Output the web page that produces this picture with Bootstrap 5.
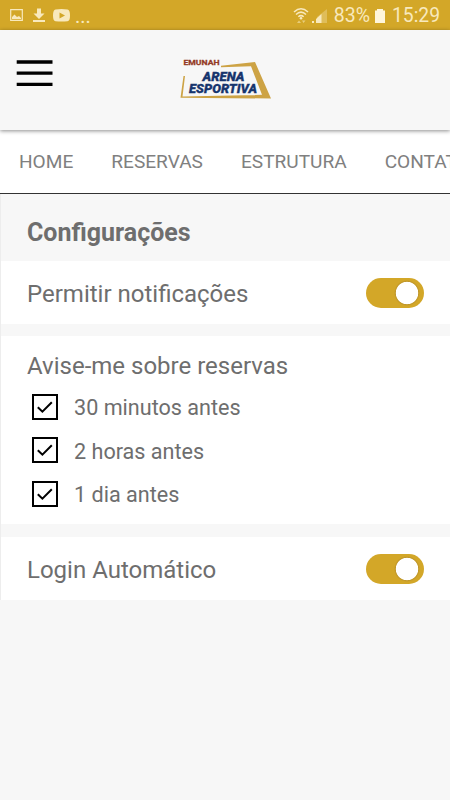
<!DOCTYPE html>
<html lang="pt-BR">
<head>
<meta charset="utf-8">
<meta name="viewport" content="width=device-width, initial-scale=1">
<title>Configurações</title>
<link href="https://cdn.jsdelivr.net/npm/bootstrap@5.3.0/dist/css/bootstrap.min.css" rel="stylesheet">
<style>
body{font-family:Roboto,"Noto Sans",sans-serif;background:#f7f7f7;color:#6e6e6e;min-height:800px;overflow-x:hidden}
.status{height:30px;background:#d3a728;color:#f8e9bd;padding:2px 10px 0 9px;font-size:20px;line-height:28px}
.status svg{flex:none}
.dots{font-size:20px;margin-left:2px}
.pct{margin-left:6px;font-size:19.5px}
.battery{margin-left:4px}
.clock{margin-left:6px;font-size:19.3px}
.topbar{height:100px;background:#f7f7f7;box-shadow:0 1px 4px rgba(0,0,0,.45);z-index:2}
.burger{margin:30px 0 0 16px}
.brand{margin:26px 0 0 125px}
.tabs{height:64px;border-bottom:1px solid #333;background:#fff;padding:1px 0 0 19px;gap:38px;font-size:19.1px;color:#808080;overflow:hidden}
.tabs a{color:inherit;white-space:nowrap}
.pane{border-left:1px solid #ededed}
.page-title{height:67px;padding:10px 0 0 26px;font-size:25px;font-weight:700;margin:0;background:#f7f7f7}
.panel{background:#fff;padding-left:26px;padding-right:26px;font-size:24px}
.setting{height:63px;padding-top:2px}
.alerts{height:188px;margin:12px 0 13px}
.alerts h2{font-size:24px;font-weight:400;line-height:30px;margin:0;padding-top:15px;color:#6e6e6e}
.choices{padding:12px 0 0 5px;gap:14.5px}
.choice{height:29px;font-size:21.6px;gap:16px;line-height:29px}
.choice .form-check-input{width:26px;height:26px;margin:-2px 0 0;border:2px solid #000;border-radius:0;background-color:#fff;background-size:18px 18px}
.choice .form-check-input:checked{background-image:url("data:image/svg+xml,%3csvg xmlns='http://www.w3.org/2000/svg' viewBox='0 0 18 18'%3e%3cpath fill='none' stroke='%23000' stroke-width='2' d='M1.8 9.2 6.4 13.7 15.8 4.2'/%3e%3c/svg%3e")}
.toggle{padding:0;min-height:0;margin:0}
.toggle .form-check-input{display:block;float:none;width:58px;height:30px;margin:-2px 0 0;border:0;background-color:#d3a728;background-size:100% 100%}
.toggle .form-check-input:checked{background-position:0 0;background-image:radial-gradient(circle at 41px 15px,#fff 10.8px,#c0972a 11.6px,#d3a728 13px)}
</style>
<script src="https://cdn.jsdelivr.net/npm/bootstrap@5.3.0/dist/js/bootstrap.bundle.min.js"></script>
</head>
<body>
<div class="status d-flex align-items-center justify-content-between">
  <div class="d-flex align-items-center">
    <svg width="64" height="16" viewBox="0 0 64 16" fill="none">
      <path d="M1.7 1.7H13.3V12.3H1.7Z" stroke="#f8e9bd" stroke-width="1.2"/>
      <path d="M3 11V9L5.5 6.5 8 9 10 8 12 10V11Z" fill="#f8e9bd"/>
      <path d="M28 .5H32V5.5H35.5L30 11 24.5 5.5H28ZM24 12H36V14H24Z" fill="#f8e9bd"/>
      <path d="M46.5 1.5Q52.5 .5 58.5 1.5 61 1.8 61 7.5 61 13 58.5 13.2 52.5 14 46.5 13.2 44 13 44 7.5 44 1.8 46.5 1.5ZM50.5 4.5V10.5L56 7.5Z" fill="#f8e9bd" fill-rule="evenodd"/>
    </svg>
    <span class="dots">...</span>
  </div>
  <div class="d-flex align-items-center">
    <svg width="37" height="18" viewBox="0 0 37 18">
      <g fill="none" stroke="#f8e9bd" stroke-width="1.5"><path d="M3 5Q10 -1.5 17 5M5 7.5Q10 2.8 15 7.5M7.3 9.8Q10 7.5 12.7 9.8"/></g>
      <circle cx="10" cy="11.3" r="1.3" fill="#f8e9bd"/>
      <path d="M6 16 8 13.5 10 16ZM11 13.5H14.5L12.5 16Z" fill="#e8cd7b"/>
      <path d="M26 10 36 2V16H26Z" fill="#dfbd59"/><path d="M25 16V12L30.500 7V16ZM21 14H23V16H21Z" fill="#f8e9bd"/>
    </svg>
    <span class="pct">83%</span>
    <svg class="battery" width="12" height="16" viewBox="0 0 12 16"><path d="M3 1H9V2.5H11V15H1V2.5H3Z" fill="#fff6dc"/></svg>
    <span class="clock">15:29</span>
  </div>
</div>
<header class="topbar position-relative d-flex align-items-start">
  <svg class="burger" width="37" height="28" viewBox="0 0 37 28" role="button" aria-label="Menu"><path d="M.7 2H36.500M.7 13.200H36.500M.7 24.300H36.500" stroke="#000" stroke-width="3.300"/></svg>
  <svg class="brand" width="96" height="46" viewBox="0 0 96 46" role="img" aria-label="Emunah Arena Esportiva">
    <path d="M43 9.800 77 6 93 42.500 2.500 41.800 5.500 20H7L4.500 40.500 84 38.800 73 10.300 43 11.200Z" fill="#cda345"/>
    <text x="5.500" y="9" font-size="8" font-weight="700" stroke="#943b25" stroke-width=".3" fill="#943b25" textLength="36" lengthAdjust="spacingAndGlyphs">EMUNAH</text>
    <g fill="#17356d" stroke="#17356d" stroke-width=".3" font-weight="900" font-style="italic" font-size="12.500"><text x="24.500" y="25.200" textLength="42" lengthAdjust="spacingAndGlyphs">ARENA</text><text x="11" y="37.300" textLength="68" lengthAdjust="spacingAndGlyphs">ESPORTIVA</text></g>
  </svg>
</header>
<nav class="tabs d-flex align-items-center">
  <a class="text-decoration-none">HOME</a><a class="text-decoration-none">RESERVAS</a><a class="text-decoration-none">ESTRUTURA</a><a class="text-decoration-none">CONTATO</a>
</nav>
<main class="pane">
  <h1 class="page-title d-flex align-items-center">Configurações</h1>
  <section class="panel setting d-flex align-items-center justify-content-between">
    <label for="notify">Permitir notificações</label>
    <div class="form-check form-switch toggle"><input class="form-check-input" type="checkbox" id="notify" checked></div>
  </section>
  <section class="panel alerts">
    <h2>Avise-me sobre reservas</h2>
    <div class="choices d-flex flex-column">
      <label class="choice d-flex align-items-center"><input class="form-check-input" type="checkbox" checked>30 minutos antes</label>
      <label class="choice d-flex align-items-center"><input class="form-check-input" type="checkbox" checked>2 horas antes</label>
      <label class="choice d-flex align-items-center"><input class="form-check-input" type="checkbox" checked>1 dia antes</label>
    </div>
  </section>
  <section class="panel setting d-flex align-items-center justify-content-between">
    <label for="auto">Login Automático</label>
    <div class="form-check form-switch toggle"><input class="form-check-input" type="checkbox" id="auto" checked></div>
  </section>
</main>
</body>
</html>
